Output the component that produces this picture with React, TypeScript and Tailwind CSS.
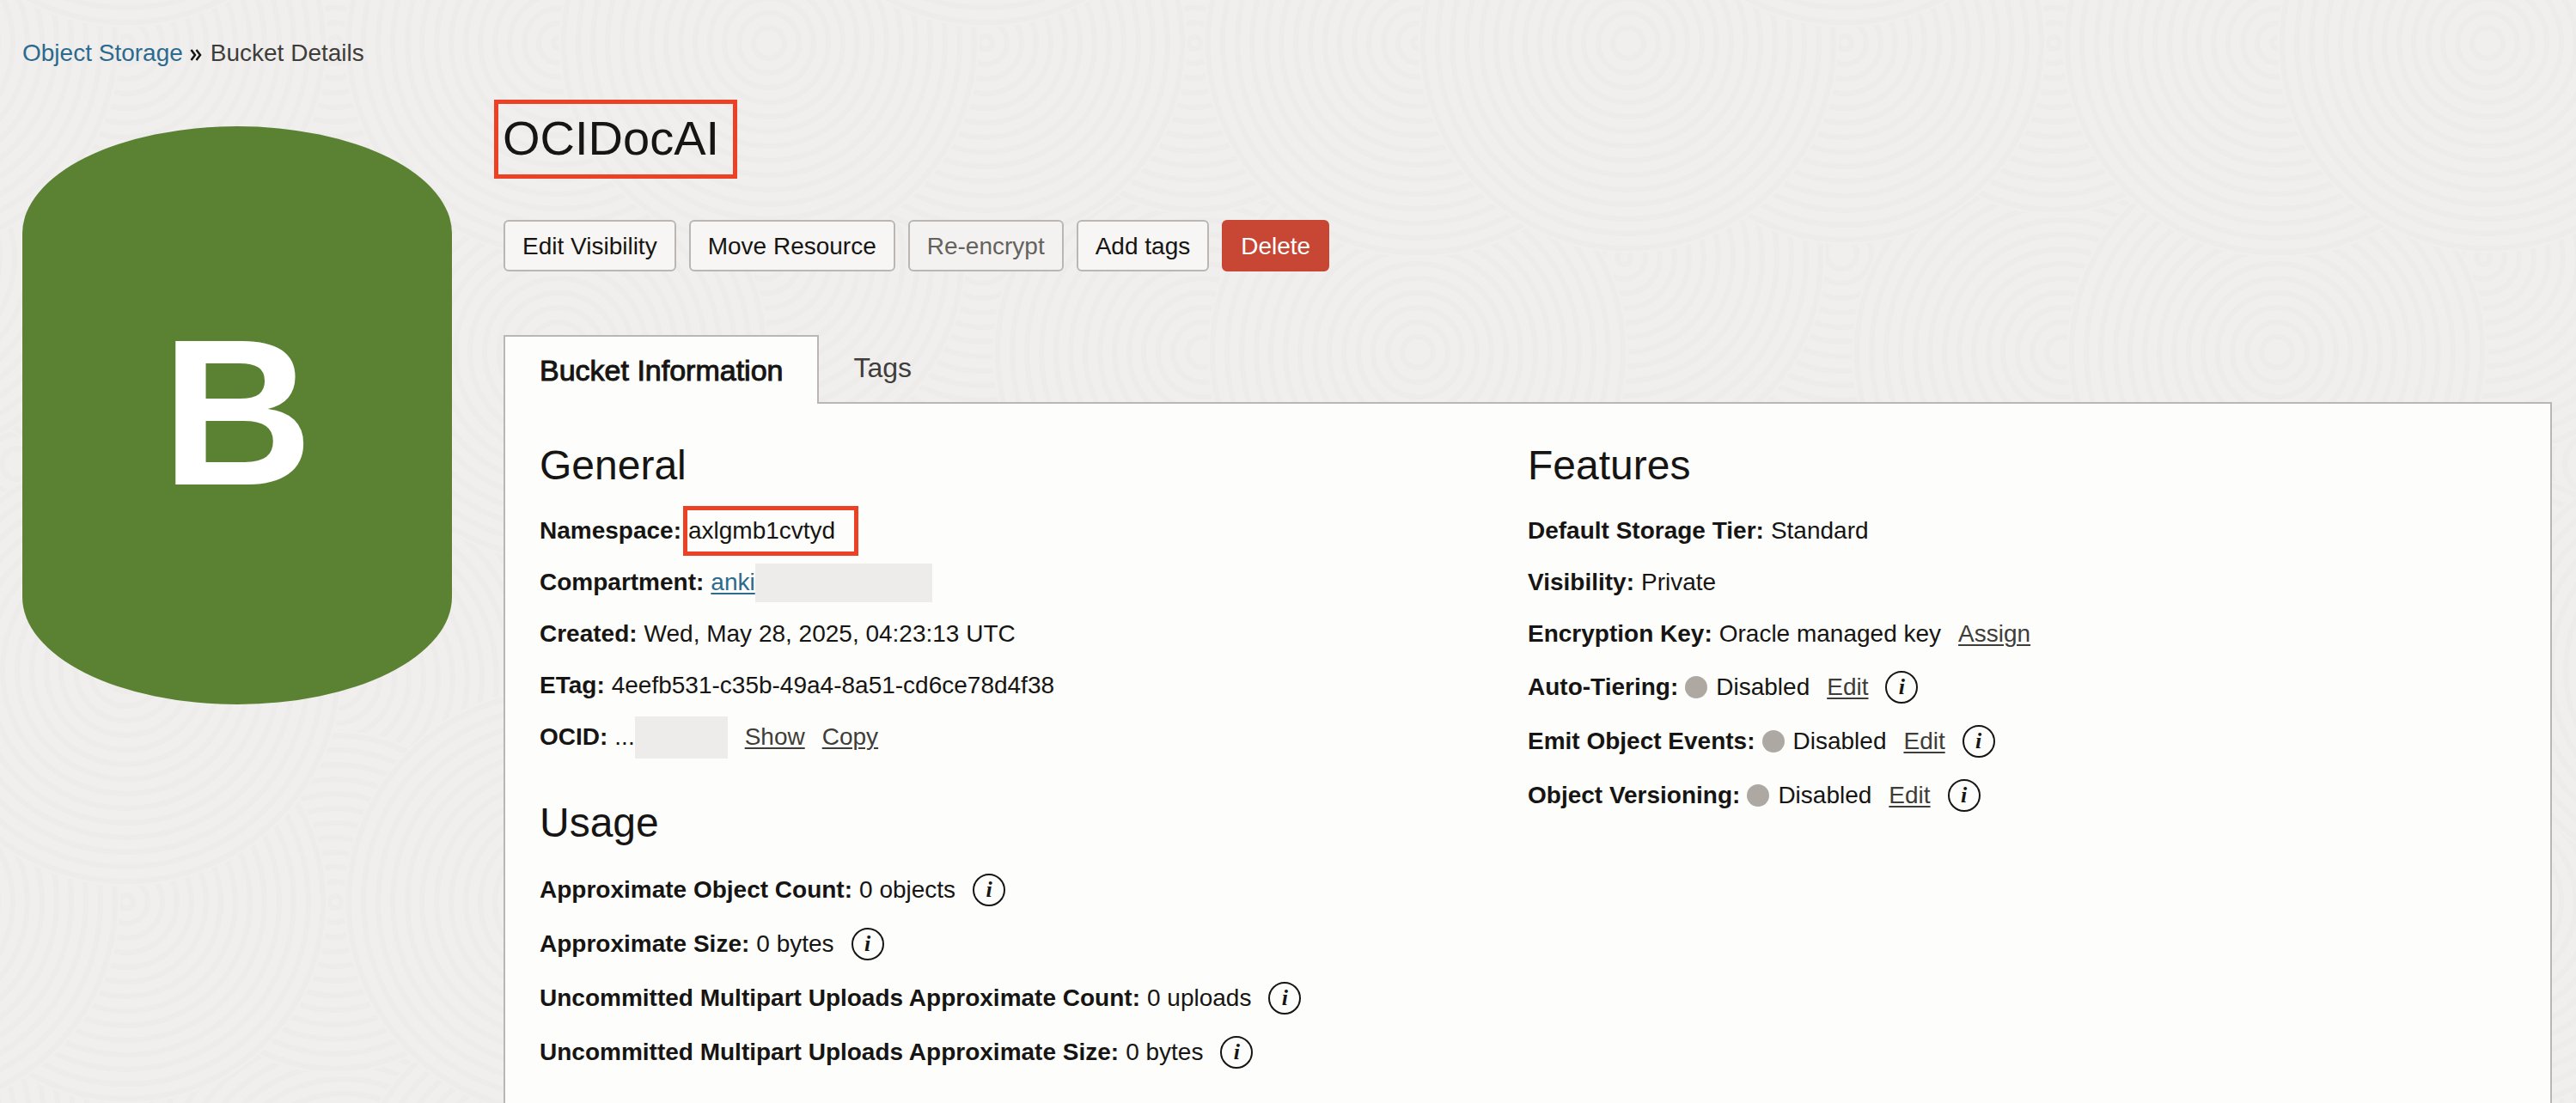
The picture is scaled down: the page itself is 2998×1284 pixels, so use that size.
import type { ReactNode } from "react";

const DISCS: [number, number, number][] = [
  [270, 540, 245],
  [770, 540, 245],
  [20, 540, 245],
  [520, 540, 245],
  [640, 780, 245],
  [390, 790, 245],
  [890, 790, 245],
  [143, 295, 245],
  [400, 410, 245],
  [890, 300, 235],
  [650, 410, 245],
  [390, 50, 200],
  [650, 50, 250],
  [147, 50, 235],
  [895, 50, 245],
  [147, 780, 252],
];
const SHIFTS = [-1000, 0, 1000];

function Ripple({ cx, cy, r }: { cx: number; cy: number; r: number }) {
  const rings: number[] = [];
  for (let radius = r - 6; radius > 4; radius -= 17) rings.push(radius);
  return (
    <g>
      <circle cx={cx} cy={cy} r={r} fill="#f0efee" />
      {rings.map((radius) => (
        <circle key={radius} cx={cx} cy={cy} r={radius} fill="none" stroke="#edecea" strokeWidth="6" />
      ))}
    </g>
  );
}

function Texture() {
  return (
    <svg className="absolute inset-0 -z-10 h-full w-full" aria-hidden="true">
      <defs>
        <pattern id="ripples" width="1000" height="1000" patternUnits="userSpaceOnUse">
          {DISCS.map(([x, y, r]) =>
            SHIFTS.map((dx) =>
              SHIFTS.map((dy) => <Ripple key={`${x}-${y}-${dx}-${dy}`} cx={x + dx} cy={y + dy} r={r} />),
            ),
          )}
        </pattern>
      </defs>
      <rect width="100%" height="100%" fill="url(#ripples)" />
    </svg>
  );
}

function Info({ about }: { about: string }) {
  return (
    <button
      type="button"
      aria-label={`About ${about}`}
      className="ml-5 flex size-[38px] shrink-0 items-center justify-center rounded-full border-2 border-[#161513] font-['Liberation_Serif',serif] text-[26px] leading-none font-bold italic"
    >
      i
    </button>
  );
}

function Action({ children }: { children: ReactNode }) {
  return (
    <button type="button" className="ml-5 text-[#3f3d3a] underline decoration-2 underline-offset-3">
      {children}
    </button>
  );
}

function Row({ label, children, tall }: { label: string; children: ReactNode; tall?: boolean }) {
  return (
    <div className={tall ? "flex h-[63px] items-center" : "flex h-[60px] items-center"}>
      <dt className="font-bold">{label}:</dt>
      <dd className="ml-2 flex items-center">{children}</dd>
    </div>
  );
}

function Toggle({ label }: { label: string }) {
  return (
    <Row label={label} tall>
      <span className="mr-[10px] size-[26px] rounded-full bg-[#aea8a3]" />
      Disabled
      <Action>Edit</Action>
      <Info about={label} />
    </Row>
  );
}

function Heading({ children }: { children: ReactNode }) {
  return <h2 className="mb-4 text-5xl leading-[60px]">{children}</h2>;
}

const BUTTON = "h-[60px] rounded-md border-2 px-5 pt-0.5";

export default function App() {
  return (
    <div className="relative isolate flex min-h-screen flex-col overflow-hidden bg-[#f0efee] font-['Liberation_Sans',Arial,sans-serif] text-[28px] leading-9 text-[#161513]">
      <Texture />
      <nav aria-label="Breadcrumb" className="flex items-center px-[26px] pt-11">
        <a href="#storage" className="text-[#2c6a8e]">
          Object Storage
        </a>
        <svg className="mr-1.5 ml-2 mt-1 h-4 w-[14px]" viewBox="0 0 14 16" fill="none" stroke="#161513" strokeWidth="2.5" aria-hidden="true">
          <path d="M1.5 2L6 8l-4.500 6M7.500 2L12 8l-4.500 6" />
        </svg>
        <span className="ml-1 text-[#3f3d3a]">Bucket Details</span>
      </nav>

      <div className="mt-9 flex flex-1 gap-[60px] pr-7 pl-[26px]">
        <div className="mt-[31px] flex h-[673px] w-[500px] shrink-0 items-center justify-center rounded-[50%/125px] bg-[#5b8232] pb-2 text-[244px] leading-none font-bold text-white">
          B
        </div>

        <main className="flex min-w-0 flex-1 flex-col">
          <h1 className="-ml-[11px] w-fit border-5 border-[#ed4126] pt-1.5 pr-4 pb-2 pl-[5px] text-[56px] leading-[68px]">
            OCIDocAI
          </h1>

          <div className="mt-12 flex gap-[15px]">
            <button type="button" className={`${BUTTON} border-[#bbb6b1] bg-[#f7f6f4]`}>
              Edit Visibility
            </button>
            <button type="button" className={`${BUTTON} border-[#bbb6b1] bg-[#f7f6f4]`}>
              Move Resource
            </button>
            <button type="button" disabled className={`${BUTTON} border-[#bbb6b1] bg-[#f3f2f0] text-[#65625e]`}>
              Re-encrypt
            </button>
            <button type="button" className={`${BUTTON} border-[#bbb6b1] bg-[#f7f6f4]`}>
              Add tags
            </button>
            <button type="button" className={`${BUTTON} border-[#c74634] bg-[#c74634] text-white`}>
              Delete
            </button>
          </div>

          <div role="tablist" className="relative mt-[74px] -mb-0.5 flex h-20 text-[32px]">
            <button
              type="button"
              role="tab"
              aria-selected="true"
              className="border-2 border-b-0 border-[#bbb6b1] bg-[#fdfdfb] px-10 text-[34px] [-webkit-text-stroke:1px_#161513]"
            >
              Bucket Information
            </button>
            <button type="button" role="tab" aria-selected="false" className="px-10 pb-1 text-[#3f3d3a]">
              Tags
            </button>
          </div>

          <section
            role="tabpanel"
            className="grid flex-1 grid-cols-2 border-2 border-b-0 border-[#bbb6b1] bg-[#fdfdfb] px-10 pt-[42px]"
          >
            <div>
              <Heading>General</Heading>
              <dl>
                <Row label="Namespace">
                  <span className="relative">
                    axlgmb1cvtyd
                    <span className="absolute -top-[11px] -right-[27px] -bottom-[11px] -left-[6px] border-5 border-[#ed4126]" />
                  </span>
                </Row>
                <Row label="Compartment">
                  <a href="#compartment" className="text-[#2c6a8e] underline decoration-2 underline-offset-3">
                    anki
                  </a>
                  <span className="h-[45px] w-[206px] bg-[#edecea]" />
                </Row>
                <Row label="Created">Wed, May 28, 2025, 04:23:13 UTC</Row>
                <Row label="ETag">4eefb531-c35b-49a4-8a51-cd6ce78d4f38</Row>
                <Row label="OCID">
                  ...
                  <span className="h-[49px] w-[108px] bg-[#edecea]" />
                  <Action>Show</Action>
                  <Action>Copy</Action>
                </Row>
              </dl>

              <div className="mt-10">
                <Heading>Usage</Heading>
                <dl>
                  <Row label="Approximate Object Count" tall>
                    0 objects
                    <Info about="Approximate Object Count" />
                  </Row>
                  <Row label="Approximate Size" tall>
                    0 bytes
                    <Info about="Approximate Size" />
                  </Row>
                  <Row label="Uncommitted Multipart Uploads Approximate Count" tall>
                    0 uploads
                    <Info about="Uncommitted Multipart Uploads Approximate Count" />
                  </Row>
                  <Row label="Uncommitted Multipart Uploads Approximate Size" tall>
                    0 bytes
                    <Info about="Uncommitted Multipart Uploads Approximate Size" />
                  </Row>
                </dl>
              </div>
            </div>

            <div>
              <Heading>Features</Heading>
              <dl>
                <Row label="Default Storage Tier">Standard</Row>
                <Row label="Visibility">Private</Row>
                <Row label="Encryption Key">
                  Oracle managed key
                  <Action>Assign</Action>
                </Row>
                <Toggle label="Auto-Tiering" />
                <Toggle label="Emit Object Events" />
                <Toggle label="Object Versioning" />
              </dl>
            </div>
          </section>
        </main>
      </div>
    </div>
  );
}
